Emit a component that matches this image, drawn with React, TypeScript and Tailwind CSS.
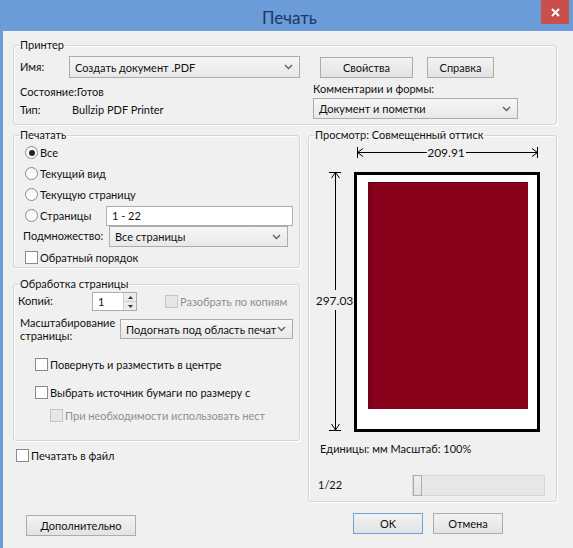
import type { ReactNode } from 'react'

function GroupBox({ title, className = '', children }: { title: string; className?: string; children: ReactNode }) {
    return (
        <fieldset className={`border border-[#d5d5d5] rounded-[3px] shadow-[inset_1px_1px_0_#fff,1px_1px_0_#fff] pl-[5px] ${className}`}>
            <legend className="px-[1px] leading-[14px]">{title}</legend>
            {children}
        </fieldset>
    )
}

function Chevron() {
    return (
        <svg width="9" height="6" viewBox="0 0 9 6" className="shrink-0">
            <polyline points="1,1 4.5,4.5 8,1" fill="none" stroke="#606060" strokeWidth="1.4" />
        </svg>
    )
}

function Select({ value, className = '' }: { value: string; className?: string }) {
    return (
        <div className={`flex items-center border border-[#acacac] bg-gradient-to-b from-[#f6f6f6] to-[#e8e8e8] pl-[5px] pr-[6px] ${className}`}>
            <span className="flex-1 min-w-0 overflow-hidden whitespace-nowrap leading-[15px]">{value}</span>
            <Chevron />
        </div>
    )
}

function Button({ label, className = '', primary = false }: { label: string; className?: string; primary?: boolean }) {
    return (
        <button
            className={`flex items-center justify-center border bg-gradient-to-b from-[#f2f2f2] to-[#e3e3e3] leading-[15px] ${
                primary ? 'border-[#6fa5dc]' : 'border-[#acacac]'
            } ${className}`}
        >
            {label}
        </button>
    )
}

function Radio({ label, checked = false }: { label: string; checked?: boolean }) {
    return (
        <div className="flex items-center h-[21px]">
            <span className="w-[13px] h-[13px] rounded-full border border-[#8a8a8a] bg-gradient-to-b from-[#f4f4f4] to-[#ffffff] flex items-center justify-center">
                {checked && <span className="w-[6px] h-[6px] rounded-full bg-[#222]" />}
            </span>
            <span className="ml-[2px] leading-[15px]">{label}</span>
        </div>
    )
}

function Checkbox({ label, disabled = false, className = '' }: { label: string; disabled?: boolean; className?: string }) {
    return (
        <div className={`flex items-center h-[20px] ${className}`}>
            <span
                className={`w-[13px] h-[13px] border ${
                    disabled ? 'border-[#c4c4c4] bg-[#e6e6e6]' : 'border-[#8a8a8a] bg-white'
                }`}
            />
            <span className={`ml-[2px] leading-[15px] whitespace-nowrap ${disabled ? 'text-[#8f8f8f]' : ''}`}>{label}</span>
        </div>
    )
}

function Spinner({ value }: { value: string }) {
    return (
        <div className="flex w-[45px] h-[19px] border border-[#abadb3] bg-white">
            <span className="flex-1 pl-[5px] leading-[17px]">{value}</span>
            <div className="flex flex-col w-[13px] border-l border-[#d0d0d0]">
                <span className="flex-1 flex items-center justify-center bg-[#ececec] border-b border-[#d0d0d0]">
                    <svg width="5" height="3" viewBox="0 0 5 3"><polygon points="0,3 2.5,0 5,3" fill="#333" /></svg>
                </span>
                <span className="flex-1 flex items-center justify-center bg-[#ececec]">
                    <svg width="5" height="3" viewBox="0 0 5 3"><polygon points="0,0 2.5,3 5,0" fill="#333" /></svg>
                </span>
            </div>
        </div>
    )
}

// page preview with the sheet and its dimension arrows
function PagePreview() {
    return (
        <svg width="247" height="295" className="block -ml-[5px]" fontFamily="Lato, Roboto, sans-serif" fontSize="12">
            <g stroke="#000" strokeWidth="1" fill="none">
                <line x1="48.5" y1="5" x2="48.5" y2="16" />
                <line x1="228.5" y1="5" x2="228.5" y2="16" />
                <line x1="48.5" y1="10.5" x2="118" y2="10.5" />
                <line x1="157" y1="10.5" x2="228.5" y2="10.5" />
                <polyline points="54,6.5 48.5,10.5 54,14.5" />
                <polyline points="223,6.5 228.5,10.5 223,14.5" />

                <line x1="20" y1="30.5" x2="32" y2="30.5" />
                <line x1="26.5" y1="30.5" x2="26.5" y2="148" />
                <line x1="26.5" y1="168" x2="26.5" y2="288" />
                <polyline points="22.5,36 26.5,30.5 30.5,36" />
                <polyline points="22.5,282 26.5,288 30.5,282" />
                <line x1="20" y1="288.5" x2="32" y2="288.5" />
            </g>
            <text x="137" y="14.5" textAnchor="middle" fill="#111">209.91</text>
            <text x="25.5" y="162.5" textAnchor="middle" fill="#111">297.03</text>

            <rect x="46.5" y="31.5" width="183" height="257" fill="#fff" stroke="#000" strokeWidth="3" />
            <rect x="59" y="40" width="160" height="227" fill="#88001a" />
            <rect x="59" y="40" width="4" height="227" fill="#77001a" />
            <rect x="59" y="40" width="160" height="1" fill="#6e0016" />
        </svg>
    )
}

export default function App() {
    return (
        <div className="w-[573px] h-[548px] bg-[#f0f0f0] flex flex-col overflow-hidden text-[11px] text-[#111] font-['Lato','Roboto',sans-serif]">
            <div className="relative h-[31px] shrink-0 bg-[#6b9bd8] flex items-center justify-center">
                <span className="text-[17px] leading-[20px] text-[#1d3766] mt-[4px] ml-[6px]">Печать</span>
                <div className="absolute right-[4px] top-0 w-[28px] h-[24px] bg-[#c9504a] flex items-center justify-center">
                    <svg width="9" height="9" viewBox="0 0 9 9">
                        <path d="M1 1 L8 8 M8 1 L1 8" stroke="#fff" strokeWidth="2" />
                    </svg>
                </div>
            </div>

            <div className="flex-1 border-l-[3px] border-[#6b9bd8] pl-[10px] pt-[7px]">
                <GroupBox title="Принтер" className="w-[544px] pb-[5px]">
                    <div className="flex items-center mt-[4px] h-[22px]">
                        <span className="w-[50px] pl-[1px]">Имя:</span>
                        <Select value="Создать документ .PDF" className="w-[231px] h-[22px]" />
                        <Button label="Свойства" className="ml-[20px] w-[93px] h-[21px]" />
                        <Button label="Справка" className="ml-[14px] w-[67px] h-[21px]" />
                    </div>
                    <div className="flex">
                        <div className="w-[294px] pl-[1px]">
                            <div className="mt-[6px] leading-[15px]">Состояние:Готов</div>
                            <div className="flex mt-[3px] leading-[15px]">
                                <span className="w-[52px]">Тип:</span>
                                <span>Bullzip PDF Printer</span>
                            </div>
                        </div>
                        <div>
                            <div className="mt-[3px] leading-[15px]">Комментарии и формы:</div>
                            <Select value="Документ и пометки" className="mt-[2px] w-[205px] h-[21px]" />
                        </div>
                    </div>
                </GroupBox>

                <div className="flex gap-[8px] mt-[3px]">
                    <div className="w-[287px]">
                        <GroupBox title="Печатать" className="pr-[6px]">
                            <div className="pl-[6px]">
                                <Radio label="Все" checked />
                                <Radio label="Текущий вид" />
                                <Radio label="Текущую страницу" />
                                <div className="flex items-center justify-between">
                                    <Radio label="Страницы" />
                                    <div className="w-[187px] h-[20px] border border-[#abadb3] bg-white pl-[5px] leading-[18px]">1 - 22</div>
                                </div>
                            </div>
                            <div className="flex items-center h-[21px] pl-[4px]">
                                <span className="w-[86px] whitespace-nowrap">Подмножество:</span>
                                <Select value="Все страницы" className="w-[179px] h-[21px]" />
                            </div>
                            <Checkbox label="Обратный порядок" className="pl-[6px] h-[19px]" />
                        </GroupBox>

                        <GroupBox title="Обработка страницы" className="mt-[9px] pr-[6px] pb-[15px]">
                            <div className="flex items-center h-[21px]">
                                <span className="w-[74px] -ml-[1px]">Копий:</span>
                                <Spinner value="1" />
                                <Checkbox label="Разобрать по копиям" disabled className="ml-[28px]" />
                            </div>
                            <div className="flex items-center h-[26px] mt-[4px]">
                                <span className="w-[101px] shrink-0 pl-[1px] leading-[13px]">
                                    Масштабирование
                                    <br />
                                    страницы:
                                </span>
                                <Select value="Подогнать под область печат" className="w-[173px] h-[20px] pl-[3px] pr-[5px]" />
                            </div>
                            <Checkbox label="Повернуть и разместить в центре" className="mt-[12px] pl-[16px]" />
                            <Checkbox label="Выбрать источник бумаги по размеру с" className="mt-[8px] pl-[16px]" />
                            <Checkbox label="При необходимости использовать нест" disabled className="mt-[3px] pl-[31px]" />
                        </GroupBox>

                        <Checkbox label="Печатать в файл" className="mt-[4px] pl-[3px]" />
                    </div>

                    <div className="w-[249px]">
                        <GroupBox title="Просмотр: Совмещенный оттиск" className="pb-[5px]">
                            <PagePreview />
                            <div className="mt-[4px] pl-[6px] leading-[15px]">Единицы: мм Масштаб: 100%</div>
                            <div className="flex items-center h-[21px] mt-[19px]">
                                <span className="w-[98px] pl-[4px]">1/22</span>
                                <div className="relative w-[133px] h-[21px] border border-[#d6d6d6] bg-[#e7e7e7]">
                                    <div className="absolute left-0 top-[-1px] w-[9px] h-[21px] border border-[#acacac] bg-gradient-to-b from-[#f0f0f0] to-[#e2e2e2]" />
                                </div>
                            </div>
                        </GroupBox>
                    </div>
                </div>

                <div className="flex mt-[11px]">
                    <Button label="Дополнительно" className="ml-[13px] mt-[2px] w-[110px] h-[21px]" />
                    <Button label="OK" primary className="ml-[217px] w-[70px] h-[21px]" />
                    <Button label="Отмена" className="ml-[10px] w-[70px] h-[21px]" />
                </div>
            </div>
        </div>
    )
}
